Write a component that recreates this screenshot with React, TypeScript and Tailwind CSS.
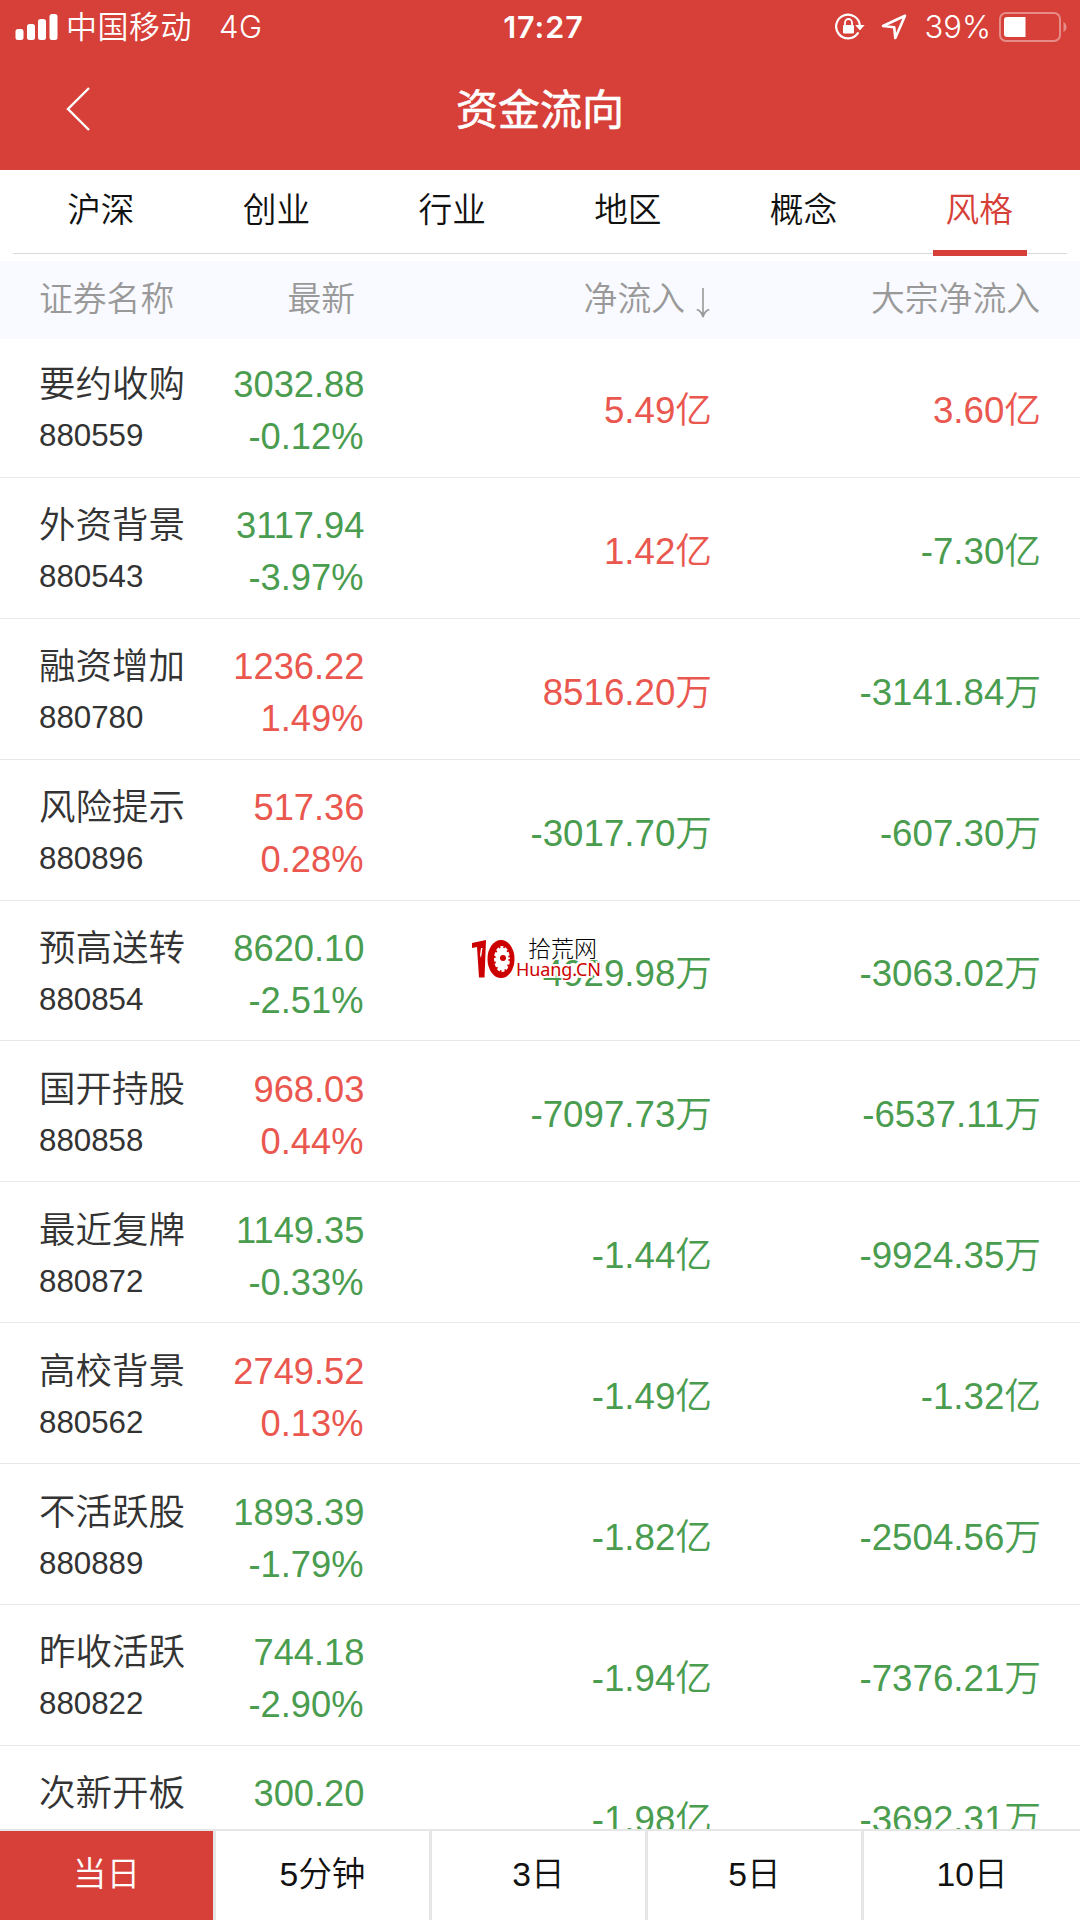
import React from 'react';

interface Stock {
  name: string;
  code: string;
  price: string;
  change: string;
  inflow: string;
  bulk: string;
  up: boolean;
}

const tabs = ['沪深', '创业', '行业', '地区', '概念', '风格'];

const periods = ['当日', '5分钟', '3日', '5日', '10日'];

const stocks: Stock[] = [
  { name: '要约收购', code: '880559', price: '3032.88', change: '-0.12%', inflow: '5.49亿', bulk: '3.60亿', up: false },
  { name: '外资背景', code: '880543', price: '3117.94', change: '-3.97%', inflow: '1.42亿', bulk: '-7.30亿', up: false },
  { name: '融资增加', code: '880780', price: '1236.22', change: '1.49%', inflow: '8516.20万', bulk: '-3141.84万', up: true },
  { name: '风险提示', code: '880896', price: '517.36', change: '0.28%', inflow: '-3017.70万', bulk: '-607.30万', up: true },
  { name: '预高送转', code: '880854', price: '8620.10', change: '-2.51%', inflow: '-4929.98万', bulk: '-3063.02万', up: false },
  { name: '国开持股', code: '880858', price: '968.03', change: '0.44%', inflow: '-7097.73万', bulk: '-6537.11万', up: true },
  { name: '最近复牌', code: '880872', price: '1149.35', change: '-0.33%', inflow: '-1.44亿', bulk: '-9924.35万', up: false },
  { name: '高校背景', code: '880562', price: '2749.52', change: '0.13%', inflow: '-1.49亿', bulk: '-1.32亿', up: true },
  { name: '不活跃股', code: '880889', price: '1893.39', change: '-1.79%', inflow: '-1.82亿', bulk: '-2504.56万', up: false },
  { name: '昨收活跃', code: '880822', price: '744.18', change: '-2.90%', inflow: '-1.94亿', bulk: '-7376.21万', up: false },
  { name: '次新开板', code: '', price: '300.20', change: '', inflow: '-1.98亿', bulk: '-3692.31万', up: false }
];

const RED = 'text-[#ea574f]';
const GREEN = 'text-[#4a9c4f]';

const flowColor = (value: string) => (value.startsWith('-') ? GREEN : RED);

const StatusBar: React.FC = () => (
  <div className="flex h-[54px] items-center text-white font-['Inter','Noto_Sans_CJK_SC',sans-serif]">
    <div className="flex flex-1 items-center pl-[15px]">
      <svg width="43" height="27" viewBox="0 0 43 27" fill="currentColor">
        <rect x="0.5" y="15" width="8" height="11" rx="2.5" />
        <rect x="12" y="10" width="8" height="16" rx="2.5" />
        <rect x="23" y="5" width="8" height="21" rx="2.5" />
        <rect x="34.5" y="0" width="8" height="26" rx="2.5" />
      </svg>
      <span className="ml-2 text-[31px] font-[350] tracking-[0.5px]">中国移动</span>
      <span className="ml-[27px] text-[31px] font-[350] tracking-[0.6px]">4G</span>
    </div>
    <span className="ml-1 text-[30.5px] font-semibold tracking-[1px]">17:27</span>
    <div className="flex flex-1 items-center justify-end pr-[12px]">
      <svg width="30" height="28" viewBox="0 0 30 28" fill="none">
        <path d="M22.9 20.2A11.9 11.9 0 1 1 24.9 12.5" stroke="currentColor" strokeWidth="2.2" strokeLinecap="round" />
        <path d="M20.2 12h9.4l-4.7 5.4z" fill="currentColor" />
        <rect x="8" y="12" width="11" height="8.5" rx="1" fill="currentColor" />
        <path d="M10 12.5v-3a3.5 3.5 0 0 1 7 0v3" stroke="currentColor" strokeWidth="1.8" />
      </svg>
      <svg className="ml-[16px]" width="26" height="26" viewBox="0 0 26 26" fill="none">
        <path d="M24 1.8 2 12l11.2 1.2L14.3 24z" stroke="currentColor" strokeWidth="2.6" strokeLinejoin="round" />
      </svg>
      <span className="ml-[18px] text-[31px] font-[350]">39%</span>
      <svg className="ml-2" width="69" height="30" viewBox="0 0 69 30" fill="none">
        <rect x="1" y="1" width="60" height="28" rx="6" stroke="white" strokeOpacity="0.4" strokeWidth="2" />
        <path d="M8 5h18.5v20H8a3 3 0 0 1-3-3V8a3 3 0 0 1 3-3z" fill="white" />
        <path d="M64.5 10c2 1 3 3 3 5s-1 4-3 5z" fill="white" fillOpacity="0.4" />
      </svg>
    </div>
  </div>
);

const Watermark: React.FC = () => (
  <div className="absolute left-[471px] top-[936px] flex">
    <svg width="45" height="44" viewBox="0 0 45 44">
      <path d="M1 7 15 4l-1.5 37.500H8L6 11l-5 1z" fill="#c00" />
      <path d="M9 19l1-7h1.5L10 22z" fill="#fff" />
      <ellipse cx="30" cy="23" rx="13.5" ry="19" fill="#c00" />
      <ellipse cx="31" cy="23" rx="8" ry="13" fill="#fff" />
      <ellipse cx="31" cy="23" rx="8.5" ry="13.5" fill="none" stroke="#c00" strokeWidth="4" strokeDasharray="2 4" />
      <circle cx="32" cy="22" r="3" fill="#c00" />
    </svg>
    <div className="flex flex-col">
      <span className="ml-[12px] h-[23px] text-[23px] leading-[23px] text-black font-light font-['Noto_Sans_CJK_SC',sans-serif]">
        拾荒网
      </span>
      <span className="h-[22px] text-[18px] leading-[20px] tracking-[-0.1px] text-[#c00] font-['Noto_Sans',sans-serif] [text-shadow:2px_0_white,-2px_0_white,0_2px_white,0_-2px_white,2px_2px_white,-2px_2px_white,2px_-2px_white,-2px_-2px_white]">
        Huang.CN
      </span>
    </div>
  </div>
);

const StockRow: React.FC<{ stock: Stock }> = ({ stock }) => (
  <li className="flex h-[140.9px] shrink-0 items-center border-b border-[#e8e8e8] pl-[39px] pt-[7px] text-[36.7px]">
    <div className="h-[104px] w-[170px] text-[#333]">
      <div className="h-[52px] text-[36.5px] font-[350] leading-[54px]">{stock.name}</div>
      <div className="text-[31.3px] leading-[52px]">{stock.code}</div>
    </div>
    <div className={`h-[102px] w-[155.5px] text-right text-[36.3px] leading-[52px] ${stock.up ? RED : GREEN}`}>
      <div>{stock.price}</div>
      <div className="pr-px">{stock.change}</div>
    </div>
    <div className={`w-[347.5px] text-right font-[350] ${flowColor(stock.inflow)}`}>{stock.inflow}</div>
    <div className={`w-[329px] text-right font-[350] ${flowColor(stock.bulk)}`}>{stock.bulk}</div>
  </li>
);

export default function App() {
  return (
    <div className="relative flex h-[1920px] w-[1080px] flex-col overflow-hidden bg-white font-['Liberation_Sans','Noto_Sans_CJK_SC',sans-serif]">
      <header className="h-[169.5px] shrink-0 bg-[#d64039] text-white">
        <StatusBar />
        <div className="relative flex h-[112px] items-center justify-center">
          <svg className="absolute left-[65px] top-[32px]" width="26" height="46" viewBox="0 0 26 46" fill="none">
            <path d="M24 2 3 23l21 21" stroke="currentColor" strokeWidth="2.4" />
          </svg>
          <h1 className="text-[42px] font-normal [-webkit-text-stroke:0.6px_white]">资金流向</h1>
        </div>
      </header>

      <nav className="h-[91.5px] shrink-0 px-[13px]">
        <ul className="flex h-[84.5px] border-b border-[#d9d9d9]">
          {tabs.map((tab) => (
            <li
              key={tab}
              className={`relative flex flex-1 justify-center pt-[15.5px] text-[33.7px] font-[350] leading-[50px] ${tab === '风格' ? 'text-[#d64039]' : 'text-[#111]'}`}
            >
              {tab}
              {tab === '风格' && <span className="absolute -bottom-[3px] left-[42px] h-[6px] w-[94px] bg-[#d64039]" />}
            </li>
          ))}
        </ul>
      </nav>

      <div className="flex h-[78px] shrink-0 items-center bg-[#f9faff] pb-[2px] pl-[39px] text-[33.8px] font-[350] text-[#999]">
        <span className="w-[170px]">证券名称</span>
        <span className="w-[146px] text-right">最新</span>
        <span className="flex w-[355px] items-center justify-end">
          净流入
          <svg className="ml-[11px] mt-2" width="14" height="30" viewBox="0 0 14 30" fill="none">
            <path d="M7 0v28" stroke="#999" strokeWidth="1.6" />
            <path d="M.8 21.5C4 22.5 6 25 7 29c1-4 3-6.500 6.200-7.500" stroke="#999" strokeWidth="1.6" />
            <path d="M4.5 24.5h5L7 29z" fill="#999" />
          </svg>
        </span>
        <span className="w-[330px] text-right">大宗净流入</span>
      </div>

      <ul className="-mt-0.5 flex min-h-0 flex-1 flex-col overflow-hidden">
        {stocks.map((stock) => (
          <StockRow key={stock.name} stock={stock} />
        ))}
      </ul>

      <footer className="grid h-[91px] shrink-0 grid-cols-5 border-t-2 border-[#e6e6e6] text-[33.7px] font-[350] text-[#111]">
        {periods.map((period, i) => (
          <button
            key={period}
            className={`flex items-center justify-center pb-[2px] ${i < 4 ? 'border-r-3 border-[#e6e6e6]' : ''} ${i === 0 ? 'bg-[#d64039] text-white' : 'bg-white'}`}
          >
            {period}
          </button>
        ))}
      </footer>

      <Watermark />
    </div>
  );
}
